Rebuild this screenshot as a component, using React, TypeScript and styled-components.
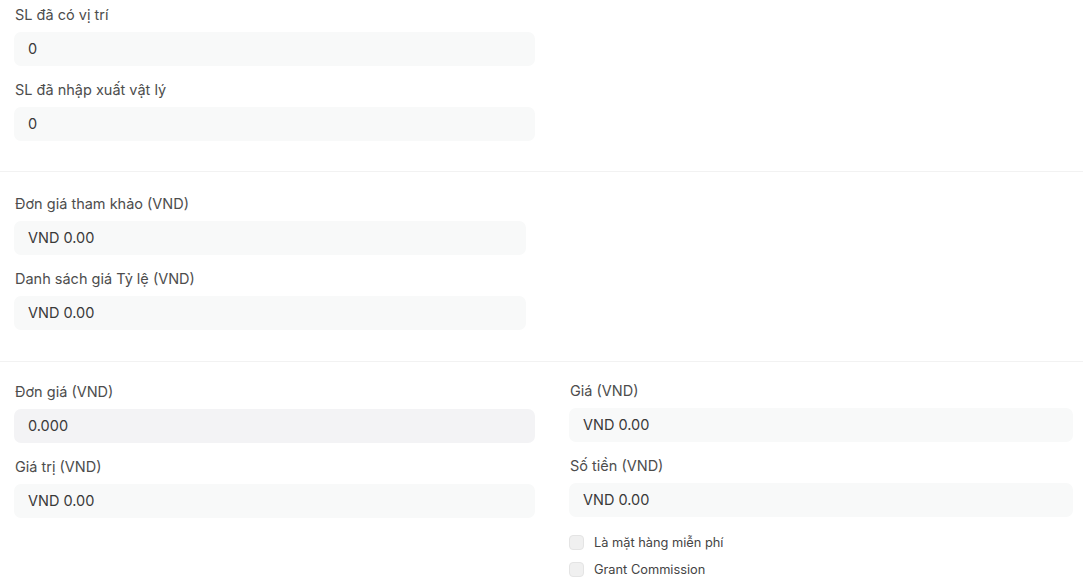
import React from 'react';
import styled, { createGlobalStyle } from 'styled-components';

const GlobalStyle = createGlobalStyle`
  * {
    box-sizing: border-box;
  }

  body {
    margin: 0;
    background: #ffffff;
    font-family: Inter, 'Noto Sans', 'Liberation Sans', sans-serif;
    color: #404040;
  }
`;

const Page = styled.div`
  width: 1083px;
  padding-top: 6px;
`;

const Section = styled.section<{ $top?: number; $bottom?: number }>`
  padding: ${(p) => p.$top ?? 22}px 10px ${(p) => p.$bottom ?? 30}px 14px;
  border-bottom: 1px solid #f2f2f2;

  &:last-child {
    border-bottom: none;
  }
`;

const Columns = styled.div`
  display: grid;
  grid-template-columns: 521px 504px;
  column-gap: 34px;
  align-items: start;
`;

const Column = styled.div<{ $width?: number; $shift?: number }>`
  display: flex;
  flex-direction: column;
  gap: 15px;
  width: ${(p) => (p.$width ? `${p.$width}px` : 'auto')};
  margin-top: ${(p) => p.$shift ?? 0}px;
`;

const Field = styled.div`
  display: flex;
  flex-direction: column;
`;

const Label = styled.label`
  font-size: 14.5px;
  line-height: 18px;
  color: #4d4d4d;
  margin: 0 0 8px 1px;
`;

const Control = styled.div<{ $muted?: boolean }>`
  height: 34px;
  display: flex;
  align-items: center;
  padding: 0 14px 2px;
  border-radius: 7px;
  background: ${(p) => (p.$muted ? '#f3f3f5' : '#f8f9f9')};
  font-size: 14.5px;
  color: #3a3a3a;
`;

const Checks = styled.div`
  display: flex;
  flex-direction: column;
  gap: 9px;
  margin-top: 1px;
`;

const CheckRow = styled.label`
  display: flex;
  align-items: center;
  gap: 10px;
  height: 18px;
  font-size: 12.8px;
  color: #444444;
`;

const Box = styled.span`
  width: 15px;
  height: 15px;
  border-radius: 4px;
  background: #f0f0f0;
  border: 1px solid #e4e4e4;
`;

type FieldProps = { label: string; value: string; muted?: boolean };

const FormField = ({ label, value, muted }: FieldProps) => (
  <Field>
    <Label>{label}</Label>
    <Control $muted={muted}>{value}</Control>
  </Field>
);

export default function App() {
  return (
    <>
      <GlobalStyle />
      <Page>
        <Section $top={0} $bottom={30}>
          <Column $width={521}>
            <FormField label="SL đã có vị trí" value="0" />
            <FormField label="SL đã nhập xuất vật lý" value="0" />
          </Column>
        </Section>

        <Section $top={23} $bottom={31}>
          <Column $width={512}>
            <FormField label="Đơn giá tham khảo (VND)" value="VND 0.00" />
            <FormField label="Danh sách giá Tỷ lệ (VND)" value="VND 0.00" />
          </Column>
        </Section>

        <Section $top={21} $bottom={10}>
          <Columns>
            <Column>
              <FormField label="Đơn giá (VND)" value="0.000" muted />
              <FormField label="Giá trị (VND)" value="VND 0.00" />
            </Column>
            <Column $shift={-1}>
              <FormField label="Giá (VND)" value="VND 0.00" />
              <FormField label="Số tiền (VND)" value="VND 0.00" />
              <Checks>
                <CheckRow>
                  <Box />
                  Là mặt hàng miễn phí
                </CheckRow>
                <CheckRow>
                  <Box />
                  Grant Commission
                </CheckRow>
              </Checks>
            </Column>
          </Columns>
        </Section>
      </Page>
    </>
  );
}
